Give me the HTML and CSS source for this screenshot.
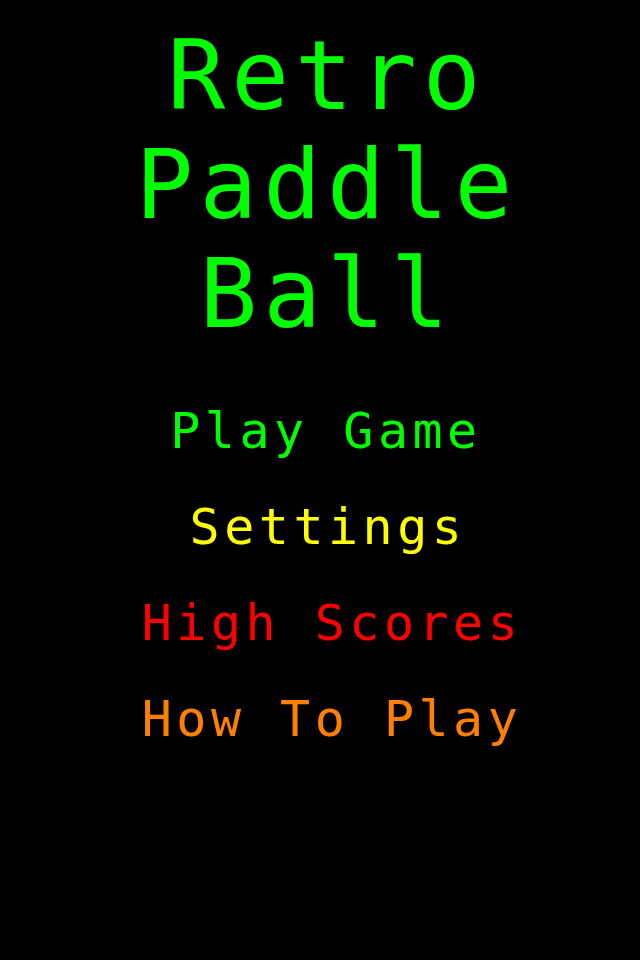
FILE: index.html
```html
<!DOCTYPE html>
<html>
<head>
<meta charset="utf-8">
<link rel="stylesheet" href="styles.css">
</head>
<body>
<main class="screen">
  <h1 class="title">Retro<br>Paddle<br>Ball</h1>
  <nav class="menu">
    <div class="item green">Play Game</div>
    <div class="item yellow">Settings</div>
    <div class="item red">High Scores</div>
    <div class="item orange">How To Play</div>
  </nav>
</main>
</body>
</html>
```
FILE: styles.css
```css
html, body {
  margin: 0;
  padding: 0;
  background: #000;
}
.screen {
  width: 640px;
  height: 960px;
  background: #000;
  display: flex;
  flex-direction: column;
  align-items: center;
  font-family: "DejaVu Sans Mono", monospace;
}
.title {
  margin: 22px 0 0 0;
  font-weight: normal;
  font-size: 96px;
  line-height: 109px;
  letter-spacing: 6px;
  color: #00ff00;
  text-align: center;
  padding-left: 14px;
}
.menu {
  margin-top: 34px;
  display: flex;
  flex-direction: column;
  align-items: center;
}
.item {
  font-size: 50px;
  line-height: 96px;
  letter-spacing: 4.5px;
  white-space: pre;
}
.green { color: #00ff00; padding-left: 12px; }
.yellow { color: #ffff00; padding-left: 16px; }
.red { color: #ff0000; padding-left: 24px; }
.orange { color: #ff8000; padding-left: 24px; }
```
